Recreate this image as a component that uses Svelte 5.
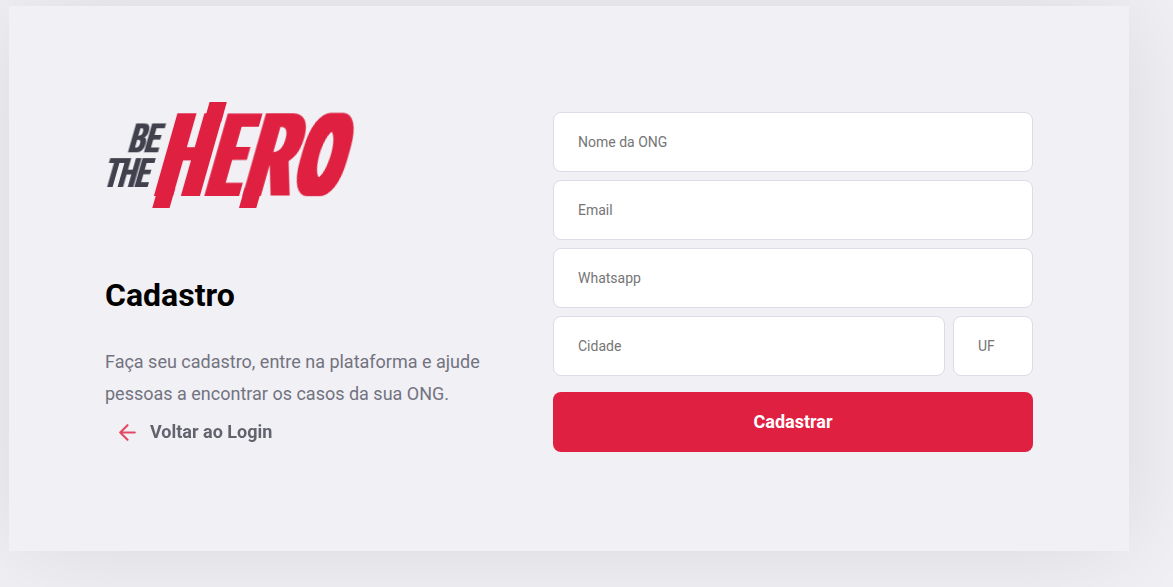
<script>
  const fields = [
    { name: 'name', label: 'Nome da ONG', type: 'text' },
    { name: 'email', label: 'Email', type: 'email' },
    { name: 'whatsapp', label: 'Whatsapp', type: 'text' },
  ];

  // Condensed logo letters: offsets, scales, weight and stem widening.
  const letters = [
    { char: 'H', x: 154.9, y: 0, sx: 0.54, sy: 1, weight: 700, widen: '8.5 0' },
    { char: 'E', x: 206, y: 0, sx: 0.45, sy: 1, weight: 700, widen: '10.8 0' },
    { char: 'R', x: 242, y: 0, sx: 0.61, sy: 1, weight: 700, widen: '6.8 0' },
    { char: 'O', x: 292.3, y: -4.6, sx: 0.53, sy: 0.895, weight: 400, widen: '12 4' },
  ];
</script>

<main>
  <div class="card">
    <section>
      <svg class="logo" width="250" height="106" viewBox="105 102 250 106" role="img" aria-label="Be The Hero">
        <defs>
          {#each letters as letter}
            <filter id={'widen-' + letter.char} x="-30%" y="-20%" width="160%" height="140%" color-interpolation-filters="sRGB">
              <feMorphology operator="dilate" radius={letter.widen} />
            </filter>
          {/each}
          <filter id="widen-small" x="-20%" y="-20%" width="140%" height="140%" color-interpolation-filters="sRGB">
            <feMorphology operator="dilate" radius="1.4 0" />
          </filter>
        </defs>
        <g class="dark" transform="translate(127.4 152.3) skewX(-15.9)">
          <text class="small" textLength="30" lengthAdjust="spacingAndGlyphs">BE</text>
        </g>
        <g class="dark" transform="translate(102.6 187) skewX(-15.9)">
          <text class="small" textLength="44.5" lengthAdjust="spacingAndGlyphs">THE</text>
        </g>
        <g class="red" transform="translate(0 196) skewX(-15.9)">
          {#each letters as letter}
            <text
              class="big"
              font-weight={letter.weight}
              filter={'url(#widen-' + letter.char + ')'}
              transform={`translate(${letter.x} ${letter.y}) scale(${letter.sx} ${letter.sy})`}
            >{letter.char}</text>
          {/each}
          <rect x="182.8" y="-94" width="17.3" height="20" />
          <rect x="155.7" y="-8" width="17.3" height="20" />
          <rect x="242.4" y="-8" width="17.3" height="20" />
        </g>
      </svg>
      <h1>Cadastro</h1>
      <p>Faça seu cadastro, entre na plataforma e ajude pessoas a encontrar os casos da sua ONG.</p>
      <a href="#login">
        <svg width="25" height="25" viewBox="0 0 24 24" aria-hidden="true">
          <path d="M19 12H5M12 19l-7-7 7-7" />
        </svg>
        <span>Voltar ao Login</span>
      </a>
    </section>
    <form>
      {#each fields as field}
        <input name={field.name} type={field.type} placeholder={field.label} />
      {/each}
      <div class="row">
        <input name="city" placeholder="Cidade" />
        <input class="uf" name="uf" placeholder="UF" />
      </div>
      <button type="button">Cadastrar</button>
    </form>
  </div>
</main>

<style>
  :global(body) {
    background: #f0f0f5;
    overflow: hidden;
  }
  main, main * { box-sizing: border-box; }
  main {
    height: 587px;
    padding: 6px 0 0 9px;
    overflow: hidden;
    font: 400 14px Roboto, sans-serif;
  }
  .card {
    width: 1120px;
    height: 544.5px;
    padding: 96px;
    display: flex;
    justify-content: space-between;
    align-items: center;
    background: #f0f0f5;
    box-shadow: 0 0 100px rgba(0, 0, 0, 0.1);
  }
  section {
    width: 380px;
    align-self: flex-start;
  }
  .logo { display: block; overflow: visible; }
  .logo text { font-family: Roboto, sans-serif; }
  .small { font-size: 41px; font-weight: 700; filter: url(#widen-small); }
  .big { font-size: 115.5px; }
  .dark { fill: #41414d; }
  .red { fill: #e02041; }
  h1 {
    margin: 69px 0 31px;
    font-size: 32px;
    line-height: 37.5px;
    font-weight: 700;
    color: #000;
  }
  p {
    margin: 0;
    font-size: 18px;
    line-height: 32px;
    color: #737380;
  }
  a {
    display: flex;
    align-items: center;
    gap: 10px;
    height: 45px;
    padding-left: 10px;
    font-size: 18px;
    font-weight: 700;
    color: #41414d;
    text-decoration: none;
    opacity: 0.8;
  }
  a span { padding-bottom: 2px; }
  a path {
    fill: none;
    stroke: #e02041;
    stroke-width: 2;
    stroke-linecap: round;
    stroke-linejoin: round;
  }
  form {
    width: 480px;
    display: flex;
    flex-direction: column;
    gap: 8px;
    margin-top: 7px;
  }
  input {
    width: 100%;
    min-width: 0;
    height: 60px;
    padding: 0 24px;
    border: 1px solid #dcdce6;
    border-radius: 8px;
    background: #fff;
    color: #333;
    font: inherit;
  }
  input::placeholder { color: #757575; }
  .row { display: flex; gap: 8px; }
  .row .uf { flex: 0 0 80px; }
  button {
    height: 60px;
    margin-top: 8px;
    border: 0;
    border-radius: 8px;
    background: #e02041;
    color: #fff;
    font: 700 18px Roboto, sans-serif;
  }
</style>
